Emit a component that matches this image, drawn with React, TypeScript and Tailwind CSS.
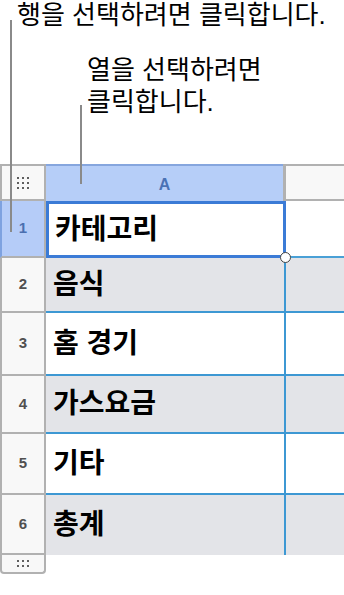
import React from "react";

type Row = {
  n: number;
  label: string;
  h: string;
  gray: boolean;
};

const rows: Row[] = [
  { n: 2, label: "음식", h: "h-[55px]", gray: true },
  { n: 3, label: "홈 경기", h: "h-[63px]", gray: false },
  { n: 4, label: "가스요금", h: "h-[58px]", gray: true },
  { n: 5, label: "기타", h: "h-[61px]", gray: false },
  { n: 6, label: "총계", h: "h-[60px]", gray: true },
];

function Dots({ cols, rowsN, size }: { cols: number; rowsN: number; size: string }) {
  return (
    <div
      className="grid gap-x-[3px] gap-y-[3px]"
      style={{ gridTemplateColumns: `repeat(${cols}, auto)` }}
    >
      {Array.from({ length: cols * rowsN }).map((_, i) => (
        <span key={i} className={`${size} bg-[#5f5f5f]`} />
      ))}
    </div>
  );
}

export default function App() {
  return (
    <div
      className="relative h-[595px] w-[344px] overflow-hidden bg-white text-black"
      style={{ fontFamily: '"Liberation Sans", "Noto Sans CJK KR", sans-serif' }}
    >
      {/* CALLOUTS */}

      <div className="pl-[17px] text-[26px] leading-[30px]">
        행을 선택하려면 클릭합니다.
      </div>

      <div className="mt-[24px] pl-[87px] text-[26px] leading-[32px]">
        <div>열을 선택하려면</div>
        <div>클릭합니다.</div>
      </div>

      {/* TABLE */}

      <div className="mt-[46px]">
        {/* HEADER */}
        <div className="flex h-[37px]">
          <div className="flex w-[46px] items-center justify-center border-2 border-[#b1b1b1] bg-[#f8f8f8]">
            <Dots cols={3} rowsN={3} size="h-[2px] w-[2px]" />
          </div>
          <div className="flex w-[237px] items-center justify-center border-t-2 border-[#86a6de] bg-[#b6cef8] pt-[2px] text-[16px] font-bold text-[#4a72b5]">
            A
          </div>
          <div className="flex-1 border-x-[3px] border-y-2 border-r-0 border-[#b1b1b1] bg-[#f8f8f8]" />
        </div>

        {/* ROW 1 */}
        <div className="relative flex h-[57px]">
          <div className="flex w-[46px] items-center justify-center border-b-2 border-l-2 border-r-2 border-[#b1b1b1] border-l-[#7ea2e0] bg-[#b5ccf8] text-[15px] font-bold text-[#4a6fb0]">
            1
          </div>
          <div className="flex w-[240px] items-center border-[3px] border-[#3b7bd6] bg-white pl-[6px] text-[28px] font-bold">
            카테고리
          </div>
          <div className="flex-1 border-b-2 border-[#49a0d6] bg-white" />
          <span className="absolute left-[280px] top-[51px] h-[11px] w-[11px] rounded-full border-[1.5px] border-[#444] bg-white" />
        </div>

        {/* ROWS */}
        {rows.map((r, i) => (
          <div key={r.n} className={`flex ${r.h}`}>
            <div className="flex w-[46px] items-center justify-center border-x-2 border-b-2 border-[#b1b1b1] bg-[#f8f8f8] text-[15px] font-bold text-[#505050]">
              {r.n}
            </div>
            <div
              className={`flex w-[238px] items-center pl-[7px] text-[28px] font-bold ${
                r.gray ? "bg-[#e3e4e8]" : "bg-white"
              } ${i === rows.length - 1 ? "" : "border-b-2 border-[#3d98d3]"}`}
            >
              {r.label}
            </div>
            <div
              className={`flex-1 border-l-2 border-[#3d98d3] ${r.gray ? "bg-[#e3e4e8]" : "bg-white"} ${
                i === rows.length - 1 ? "" : "border-b-2"
              }`}
            />
          </div>
        ))}

        {/* BOTTOM HANDLE */}
        <div className="flex h-[19px] w-[46px] items-center justify-center rounded-b-[4px] border-x-2 border-b-2 border-[#b1b1b1] bg-[#f8f8f8]">
          <Dots cols={3} rowsN={2} size="h-[2px] w-[2px]" />
        </div>
      </div>

      {/* LEADER LINES */}

      <span className="absolute left-[10px] top-[20px] h-[212px] w-[2px] bg-[#8a8a8a]" />
      <span className="absolute left-[80px] top-[105px] h-[79px] w-[2px] bg-[#8a8a8a]" />
    </div>
  );
}
